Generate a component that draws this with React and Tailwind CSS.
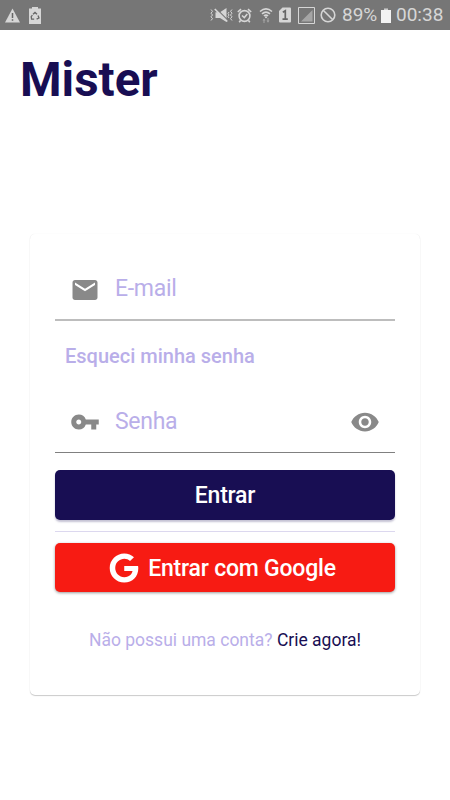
import React from 'react';
import { MdEmail, MdVpnKey, MdVisibility } from 'react-icons/md';
import { FaGoogle } from 'react-icons/fa';

const StatusBar = () => {
  return (
    <div className="flex h-[30px] items-center bg-[#767676] text-[#d6d6d6]">
      {/* Warning */}
      <svg className="ml-[5px] h-[15px] w-[15px]" viewBox="0 0 15 15">
        <path d="M7.5 0.5L15 14.5H0z" fill="currentColor" />
        <path d="M7.5 5v5M7.5 11.2v1.6" stroke="#666" strokeWidth="1.5" />
      </svg>
      {/* Battery recycle */}
      <svg className="ml-[9px] h-[17px] w-[12px]" viewBox="0 0 12 17">
        <path d="M3 0h6v1.5h3V17H0V1.5h3z" fill="currentColor" />
        <path d="M4 7.2L6 5.4l2 1.8M9 8.6l1 2.4-2.4 1.2M5.2 12.2H2.6L2.2 9.6l1.2-1.5" fill="none" stroke="#666" strokeWidth="1.3" />
      </svg>

      {/* Vibrate / muted */}
      <svg className="ml-[169px] h-[16px] w-[23px]" viewBox="0 0 23 16">
        <path d="M1 2.5l1.5 1.8L1 6.2l1.5 1.8L1 9.8l1.5 1.8L1 13.5M22 2.5l-1.5 1.8L22 6.2l-1.5 1.8L22 9.8l-1.5 1.8L22 13.5M19 5l-1 1.5L19 8l-1 1.5 1 1.5" fill="none" stroke="currentColor" strokeWidth="1" />
        <path d="M5.5 5.2H10L16.5 1v14L10 11H5.5z" fill="currentColor" />
        <path d="M6 1.5l12.5 12.5" stroke="#767676" strokeWidth="1.2" />
        <path d="M4.8 2l12.5 12.5" stroke="currentColor" strokeWidth="1.7" />
      </svg>
      {/* Alarm */}
      <svg className="ml-[4px] h-[15px] w-[15px]" viewBox="0 0 15 15" fill="none" stroke="currentColor" strokeWidth="1.6">
        <circle cx="7.5" cy="8" r="5.4" />
        <path d="M0.8 4L4 1.2M14.2 4L11 1.2M5 7.5l2.3 2L10.3 6M3.5 12.5L2.2 14.3M11.5 12.5l1.3 1.8" />
      </svg>
      {/* Wifi */}
      <svg className="ml-[7px] h-[16px] w-[14px]" viewBox="0 0 14 16">
        <path d="M1 4.5Q7-0.8 13 4.5M3 6.8Q7 3.3 11 6.8M4.9 9Q7 7.3 9.1 9" fill="none" stroke="currentColor" strokeWidth="1.6" />
        <circle cx="7" cy="10.3" r="1" fill="currentColor" />
        <path d="M3.5 13.5l1.5-2 1.5 2h-1V16h-1v-2.5zM7.5 13.5h1V11h1v2.5h1L9 15.8z" fill="#a5a5a5" />
      </svg>
      {/* SIM 1 */}
      <svg className="ml-[6px] h-[16px] w-[12px]" viewBox="0 0 12 16">
        <path d="M3.5 0.5H11a1 1 0 0 1 1 1v13a1 1 0 0 1-1 1H1a1 1 0 0 1-1-1V4z" fill="currentColor" />
        <path d="M3.8 5.2L6.3 3.8V12M3.5 12.2h5.3" fill="none" stroke="#666" strokeWidth="1.7" />
      </svg>
      {/* Signal */}
      <svg className="ml-[7px] h-[17px] w-[17px]" viewBox="0 0 17 17">
        <path d="M14.5 3v11.5H3z" fill="#a5a5a5" />
        <path d="M0.5 0.5h16v16H0.5z" fill="none" stroke="currentColor" />
      </svg>
      {/* Blocked */}
      <svg className="ml-[5px] h-[16px] w-[16px]" viewBox="0 0 16 16" fill="none" stroke="currentColor" strokeWidth="1.6">
        <circle cx="8" cy="8" r="6.8" />
        <path d="M3.2 3.2l9.6 9.6" />
      </svg>
      <span className="ml-[6px] w-[35px] whitespace-nowrap text-[19px] leading-[30px]">89%</span>
      {/* Battery */}
      <svg className="ml-[4px] h-[15px] w-[10px]" viewBox="0 0 10 15">
        <path d="M3 0h4v2h3v13H0V2h3z" fill="#f3f3f3" />
        <path d="M3 0h4v1.5H3z" fill="#a5a5a5" />
      </svg>
      <span className="ml-[5px] whitespace-nowrap text-[19px] leading-[30px]">00:38</span>
    </div>
  );
};

const Field = ({ icon, label, trailing, lineClass }) => {
  return (
    <div className={`flex h-[62px] items-center px-[15px] pt-px text-[#898989] ${lineClass}`}>
      {icon}
      <span className="ml-[15px] flex-1 pb-px text-[23px] leading-[30px] tracking-[-0.3px] text-[#b9aee9]">{label}</span>
      {trailing}
    </div>
  );
};

export default function App() {
  return (
    <div className="h-[800px] w-[450px] overflow-hidden bg-white font-['Roboto',sans-serif]">
      <StatusBar />
      <h1 className="mt-[20px] ml-5 text-[47.5px] leading-[60px] font-bold text-[#180e53]">Mister</h1>

      {/* Login card */}
      <div className="mx-[30px] mt-[124px] h-[461px] rounded-[5px] px-[25px] pt-[25px] shadow-[0_1px_1px_rgba(0,0,0,0.2),0_0_1px_rgba(0,0,0,0.1)]">
        <Field icon={<MdEmail size={30} />} label="E-mail" lineClass="border-b-2 border-[#bdbdbd]" />
        <a className="mt-[20px] ml-[10px] block text-[20px] leading-[30px] font-medium text-[#b9aee9]">
          Esqueci minha senha
        </a>
        <div className="mt-[20px]">
          <Field
            icon={<MdVpnKey size={30} />}
            label="Senha"
            trailing={<MdVisibility size={30} />}
            lineClass="border-b border-[#808080]"
          />
        </div>
        <button className="mt-[17px] block h-[50px] w-full rounded-[5px] bg-[#180e53] pt-[3px] text-[23px] font-medium tracking-[-0.2px] text-white shadow-[0_2px_2px_rgba(24,14,83,0.25)]">
          Entrar
        </button>
        <div className="mt-[11px] h-px bg-[#dcd8ef]" />
        <button className="mt-[11px] flex h-[49px] w-full items-center justify-center gap-[9px] rounded-[5px] bg-[#f71b13] pr-[5px] text-[23px] font-medium tracking-[-0.22px] text-white shadow-[0_1px_3px_rgba(0,0,0,0.4)]">
          <FaGoogle size={30} />
          <span className="pt-[3px]">Entrar com Google</span>
        </button>
        <p className="mt-[33px] text-center text-[17.5px] leading-[30px] text-[#b9aee9]">
          Não possui uma conta? <span className="text-[#180e53]">Crie agora!</span>
        </p>
      </div>
    </div>
  );
}
